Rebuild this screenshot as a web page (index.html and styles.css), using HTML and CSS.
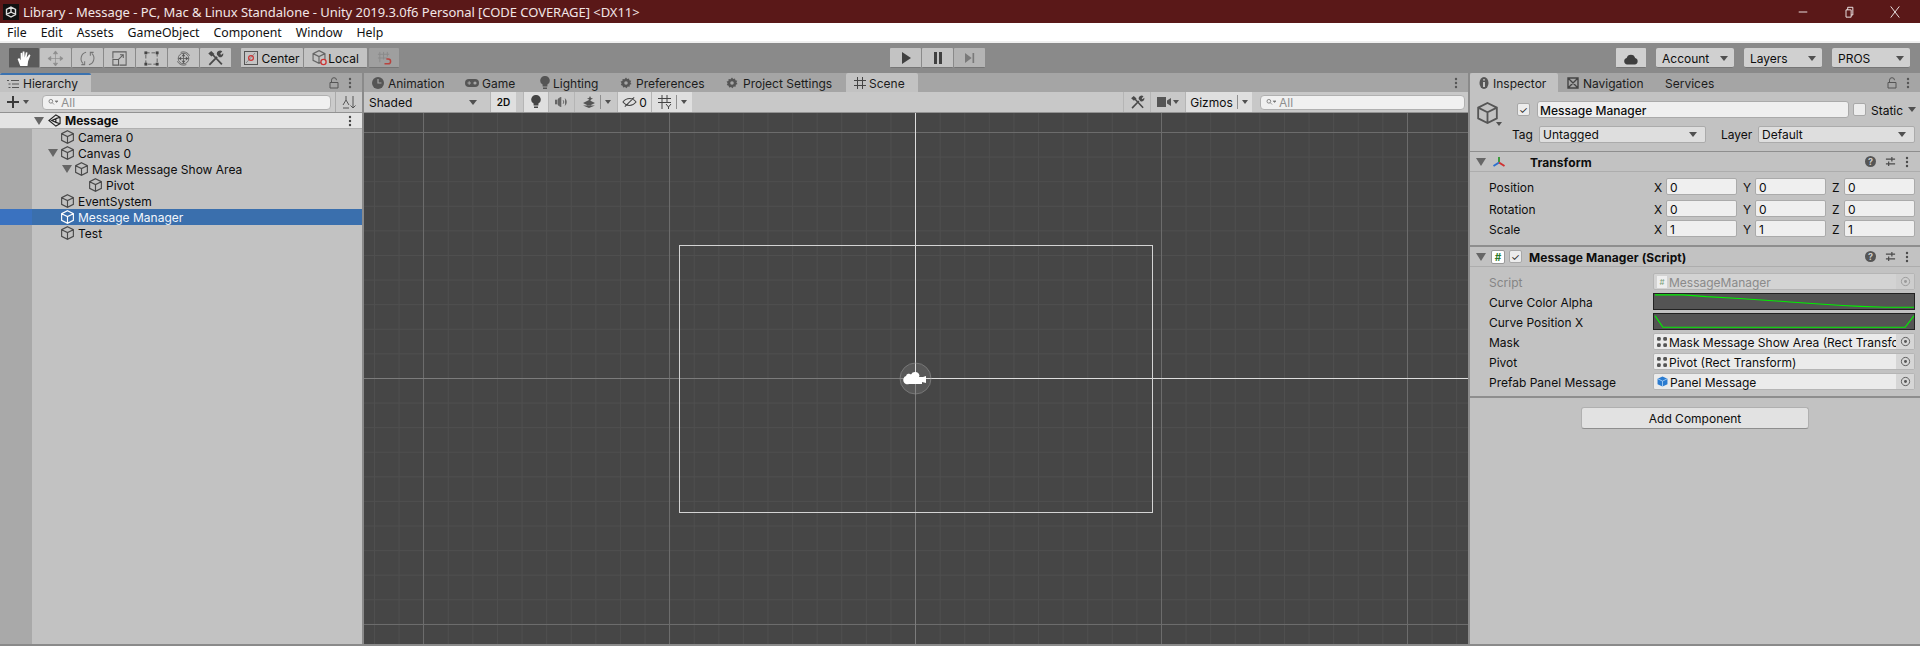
FILE: index.html
```html
<!doctype html>
<html lang="en">
<head>
    <meta charset="UTF-8">
    <title>Library - Message - Unity</title>
    <link rel="stylesheet" href="styles.css">
</head>
<body>
    <svg class="defs" width="0" height="0">
        <symbol id="cube" viewBox="0.8 0.4 12.4 13.2"><path d="M7 1 L12.6 3.8 V10.2 L7 13 L1.4 10.2 V3.8 Z M1.4 3.8 L7 6.6 L12.6 3.8 M7 6.6 V13" fill="none" stroke="currentColor" stroke-width="1.1"/></symbol>
        <symbol id="gear" viewBox="0 0 12 12"><path d="M6 0.5 L7.2 2 L9 1.4 L9.4 3.2 L11.2 3.8 L10.4 5.5 L11.5 7 L9.8 7.8 L9.6 9.7 L7.7 9.6 L6.5 11.3 L5 10 L3.1 10.6 L2.6 8.7 L0.8 8 L1.6 6.2 L0.6 4.6 L2.4 3.9 L2.6 2 L4.5 2.2 Z" fill="currentColor"/><circle cx="6" cy="6" r="1.8" fill="#a5a5a5"/></symbol>
        <symbol id="lock" viewBox="0 0 10 12"><path d="M2.5 5 V3.2 a2.5 2.5 0 0 1 5 0 M1 5.5 H9 V11 H1 Z" fill="none" stroke="currentColor" stroke-width="1"/></symbol>
        <symbol id="dots" viewBox="0 0 4 12"><circle cx="2" cy="2" r="1.2" fill="currentColor"/><circle cx="2" cy="6" r="1.2" fill="currentColor"/><circle cx="2" cy="10" r="1.2" fill="currentColor"/></symbol>
        <symbol id="target" viewBox="0 0 12 12"><circle cx="6" cy="6" r="4.5" fill="none" stroke="currentColor"/><circle cx="6" cy="6" r="1.6" fill="currentColor"/></symbol>
        <symbol id="lens" viewBox="0 0 14 10"><circle cx="4" cy="4" r="2.6" fill="none" stroke="currentColor" stroke-width="1.2"/><path d="M6 6 L8.5 8.5 M10 3.5 H14 L12 5.6 Z" stroke="currentColor" fill="currentColor"/></symbol>
        <symbol id="rect-handles" viewBox="0 0 8 8"><g fill="currentColor"><rect x="0" y="0" width="3" height="3" rx="1"/><rect x="5" y="0" width="3" height="3" rx="1"/><rect x="0" y="5" width="3" height="3" rx="1"/><rect x="5" y="5" width="3" height="3" rx="1"/></g></symbol>
        <symbol id="sliders" viewBox="0 0 12 12"><path d="M1 3.5 H11 M1 8.5 H11 M7.5 1 V6 M4 6 V11" stroke="currentColor" stroke-width="1.3" fill="none"/></symbol>
        <symbol id="wrench" viewBox="0 0 16 16"><path d="M2.2 14 L9.5 6.4 M5 4 L14 13.6" stroke="#4a4a4a" stroke-width="1.7" fill="none"/><path d="M1.2 3.4 L4 1 L7 3.8 L4.2 6.2 Z M9.4 4.5 a3 3 0 0 1 5 -3 L12.5 3.4 L13.2 4.6 L15.2 3 a3 3 0 0 1 -4 3.6 Z" fill="#4a4a4a"/></symbol>
    </svg>

    <div class="titlebar">
        <svg class="app-icon" viewBox="0 0 16 16"><rect width="16" height="16" fill="#111"/><path d="M8 3 L12.5 5.5 V10.5 L8 13 L3.5 10.5 V5.5 Z M8 3 V8 L3.5 10.5 M8 8 L12.5 10.5" fill="none" stroke="#ddd" stroke-width="1.4"/></svg>
        <span class="title-text">Library - Message - PC, Mac &amp; Linux Standalone - Unity 2019.3.0f6 Personal [CODE COVERAGE] &lt;DX11&gt;</span>
        <div class="win-buttons">
            <svg viewBox="0 0 14 14"><path d="M2 7 H12" stroke="#fff" stroke-width="1"/></svg>
            <svg viewBox="0 0 14 14"><path d="M3.5 4.5 H9.5 V13 H3.5 Z M5.5 4.5 V1.5 H11.5 V10.5 H9.5" fill="none" stroke="#fff"/></svg>
            <svg viewBox="0 0 14 14"><path d="M2 0.5 L12 13.5 M12 0.5 L2 13.5" stroke="#fff" stroke-width="1"/></svg>
        </div>
    </div>

    <div class="menubar">
        <span>File</span><span>Edit</span><span>Assets</span><span>GameObject</span><span>Component</span><span>Window</span><span>Help</span>
    </div>

    <div class="toolbar">
        <div class="btn-group tools">
            <div class="tool active hand"><svg viewBox="0 0 16 16"><path d="M4 15 L1.5 8.5 L3 7.6 L4.4 9.6 V2.8 L5.9 2.6 L6.3 7 V1.4 L7.9 1.4 L8.2 7 L9.3 2 L10.8 2.4 L10 7.4 L12.4 4 L13.6 5 L11.4 10.5 L10.8 15 Z" fill="#fff"/></svg></div>
            <div class="tool"><svg viewBox="0 0 18 18"><path d="M9 1 L11.2 4 H6.8 Z M9 17 L11.2 14 H6.8 Z M1 9 L4 6.8 V11.2 Z M17 9 L14 6.8 V11.2 Z M4 9 H14 M9 4 V14" fill="#8c8c8c" stroke="#8c8c8c" stroke-width="0.7"/></svg></div>
            <div class="tool"><svg viewBox="0 0 18 18"><path d="M7.5 2.5 A7 7 0 0 0 4.5 14.5 M10.5 15.5 A7 7 0 0 0 13.5 3.5 M2.5 15.5 H6 V12 M15.5 2.5 H12 V6" fill="none" stroke="#757575" stroke-width="1.1"/></svg></div>
            <div class="tool"><svg viewBox="0 0 18 18"><path d="M2 9 V2 H16 V16 H9 M2 10 H8 V16 H2 Z M8 10 L13 5 M9.5 5 H13 V8.5" fill="none" stroke="#5f5f5f" stroke-width="1.1"/></svg></div>
            <div class="tool"><svg viewBox="0 0 18 18"><path d="M3 3 H15 V15 H3 Z" fill="none" stroke="#5f5f5f" stroke-dasharray="4 2"/><g fill="#444"><rect x="1.5" y="1.5" width="3" height="3"/><rect x="13.5" y="1.5" width="3" height="3"/><rect x="1.5" y="13.5" width="3" height="3"/><rect x="13.5" y="13.5" width="3" height="3"/></g></svg></div>
            <div class="tool"><svg viewBox="0 0 18 18"><circle cx="9" cy="9" r="5.6" fill="none" stroke="#666"/><path d="M9 3.4 V14.6 M3.4 9 H14.6 M6 2.5 A7.5 7.5 0 0 1 15.5 6 M12 15.5 A7.5 7.5 0 0 1 2.5 12" fill="none" stroke="#666"/><path d="M9 4 L11 6.5 H7 Z M9 14 L11 11.5 H7 Z M4 9 L6.5 7 V11 Z M14 9 L11.5 7 V11 Z" fill="#555"/></svg></div>
            <div class="tool"><svg viewBox="0 0 16 16"><use href="#wrench"/></svg></div>
        </div>
        <div class="btn-group pivots">
            <div class="tool pivot-center"><svg viewBox="0 0 14 14"><rect x="0.5" y="0.5" width="13" height="13" fill="none" stroke="#555"/><path d="M2 12 L11 2" stroke="#888"/><circle cx="7" cy="7" r="2.4" fill="none" stroke="#c33" stroke-width="1.2"/></svg>Center</div>
            <div class="tool pivot-local"><svg viewBox="0 0 16 16"><use href="#cube" width="14" height="14"/><circle cx="11.5" cy="12" r="2.6" fill="#ccc" stroke="#c33" stroke-width="1.3"/></svg>Local</div>
        </div>
        <div class="tool snap"><svg viewBox="0 0 16 16"><path d="M3 1 V12 M7 1 V9 M11 1 V6 M1 3.5 H13 M1 7.5 H11" stroke="#8a8a8a" fill="none"/><path d="M8 13.6 H12 a2.2 2.2 0 0 0 0 -5 H10" fill="none" stroke="#b8433e" stroke-width="1.6"/></svg></div>

        <div class="btn-group play">
            <div class="tool"><svg viewBox="0 0 10 12"><path d="M1 0 L10 6 L1 12 Z" fill="#404040"/></svg></div>
            <div class="tool"><svg viewBox="0 0 10 12"><path d="M1 0 H4 V12 H1 Z M6 0 H9 V12 H6 Z" fill="#404040"/></svg></div>
            <div class="tool step"><svg viewBox="0 0 12 12"><path d="M0 0 L8 6 L0 12 Z M9 0 H11 V12 H9 Z" fill="#7a7a7a"/></svg></div>
        </div>

        <div class="tool cloud"><svg viewBox="0 0 14 12"><path d="M3.5 11.5 a3 3 0 0 1 -0.5 -5.9 a4 4 0 0 1 7.8 0 a3 3 0 0 1 -0.3 5.9 Z" fill="#3e3e3e"/></svg></div>
        <div class="drop">Account<i class="arrow"></i></div>
        <div class="drop">Layers<i class="arrow"></i></div>
        <div class="drop">PROS<i class="arrow"></i></div>
    </div>

    <div class="workspace">
        <section class="panel hierarchy">
            <div class="tabs">
                <div class="tab active blue">
                    <svg class="tab-icon" viewBox="0 0 12 10"><path d="M0 1.5 H2 M4 1.5 H12 M1.5 5 H3.5 M5 5 H12 M1.5 8.5 H3.5 M5 8.5 H12" stroke="#555"/></svg>Hierarchy
                </div>
                <div class="tab-actions"><svg class="lock"><use href="#lock"/></svg><svg class="dots"><use href="#dots"/></svg></div>
            </div>
            <div class="subbar hier-bar">
                <svg class="plus" viewBox="0 0 12 12"><path d="M6 0 V12 M0 6 H12" stroke="#3a3a3a" stroke-width="2"/></svg>
                <i class="arrow plus-arrow"></i>
                <div class="search"><svg class="lens"><use href="#lens"/></svg>All</div>
                <div class="sort"><svg viewBox="0 0 14 14"><path d="M4 1 V5 M1 10 L4 5 L7 10 M1 13 H7" stroke="#555" fill="none"/><path d="M11 1 V13 M8.5 10.5 L11 13 L13.5 10.5" stroke="#555" fill="none"/></svg></div>
            </div>
            <div class="tree">
                <div class="scene-row"><i class="fold"></i><svg class="unity-mark" viewBox="0 0 14 14"><path d="M8.5 1 L13 3.6 V10.4 L8.5 13 L1 7 Z M8.5 5 L13 3.6 M8.5 9 L13 10.4 M8.5 5 V9 L4 7 Z" fill="none" stroke="#222" stroke-width="1.2"/></svg><b>Message</b><svg class="dots row-dots"><use href="#dots"/></svg></div>
                <div class="row d1"><svg class="cube"><use href="#cube"/></svg>Camera 0</div>
                <div class="row d1 open"><i class="fold"></i><svg class="cube"><use href="#cube"/></svg>Canvas 0</div>
                <div class="row d2 open"><i class="fold"></i><svg class="cube"><use href="#cube"/></svg>Mask Message Show Area</div>
                <div class="row d3"><svg class="cube"><use href="#cube"/></svg>Pivot</div>
                <div class="row d1"><svg class="cube"><use href="#cube"/></svg>EventSystem</div>
                <div class="row d1 selected"><svg class="cube"><use href="#cube"/></svg>Message Manager</div>
                <div class="row d1"><svg class="cube"><use href="#cube"/></svg>Test</div>
            </div>
        </section>

        <section class="panel center">
            <div class="tabs">
                <div class="tab t-anim"><svg class="tab-icon" viewBox="0 0 12 12"><circle cx="6" cy="6" r="6" fill="#555"/><path d="M6 2 V6 H9.5" stroke="#a5a5a5" stroke-width="1.2" fill="none"/></svg>Animation</div>
                <div class="tab t-game"><svg class="tab-icon wide" viewBox="0 0 14 8"><rect width="14" height="8" rx="4" fill="#555"/><circle cx="10" cy="4" r="1.6" fill="#a5a5a5"/><path d="M2.5 4 H6 M4.2 2.2 V5.8" stroke="#a5a5a5"/></svg>Game</div>
                <div class="tab t-light"><svg class="tab-icon bulb" viewBox="0 0 10 14"><path d="M5 0 a4.6 4.6 0 0 1 2.4 8.6 V10.4 H2.6 V8.6 A4.6 4.6 0 0 1 5 0 Z M3 11.6 H7 V13 H3 Z" fill="#555"/></svg>Lighting</div>
                <div class="tab t-pref"><svg class="tab-icon"><use href="#gear"/></svg>Preferences</div>
                <div class="tab t-proj"><svg class="tab-icon"><use href="#gear"/></svg>Project Settings</div>
                <div class="tab active t-scene"><svg class="tab-icon" viewBox="0 0 12 12"><path d="M3.5 0 V12 M8.5 0 V12 M0 3.5 H12 M0 8.5 H12" stroke="#444"/></svg>Scene</div>
                <div class="tab-actions"><svg class="dots"><use href="#dots"/></svg></div>
            </div>
            <div class="subbar scene-bar">
                <div class="shaded">Shaded<i class="arrow"></i></div>
                <div class="scene-btn two-d">2D</div>
                <div class="scene-btn on w25"><svg class="bulb-sm" viewBox="0 0 10 14"><path d="M5 0 a4.6 4.6 0 0 1 2.4 8.6 V10.4 H2.6 V8.6 A4.6 4.6 0 0 1 5 0 Z M3 11.6 H7 V13 H3 Z" fill="#444"/></svg></div>
                <div class="scene-btn w26"><svg class="audio" viewBox="0 0 14 10"><path d="M0 3 H2 V7 H0 Z M3 2 L6 0 V10 L3 8 Z M8 3 a3 3 0 0 1 0 4 M10 1.5 a5 5 0 0 1 0 7" fill="#666" stroke="#666" stroke-width="0.6"/></svg></div>
                <div class="scene-btn w43"><svg class="fx" viewBox="0 0 14 12"><path d="M1 7 L7 4 L13 7 L7 10 Z M1 9.5 L7 12 L13 9.5 M8 0 L9 2 L11 2.5 L9 3.5 L8 5.5 L7 3.5 L5 2.5 L7 2 Z" fill="#555"/></svg><span class="sep"></span><i class="arrow"></i></div>
                <div class="scene-btn on w34"><svg class="eye" viewBox="0 0 16 12"><path d="M1 6 C5 1 11 1 15 6 C11 11 5 11 1 6 Z M3 11 L13 1" fill="none" stroke="#444" stroke-width="1.1"/></svg>0</div>
                <div class="scene-btn on w41"><svg class="gridv" viewBox="0 0 14 14"><path d="M4 0 V14 M9 0 V7 M0 3.5 H13 M0 7.5 H13 M8 9 L10.5 12 L13 9 M10.5 12 V14" fill="none" stroke="#444"/></svg><span class="sep"></span><i class="arrow"></i></div>
                <div class="spacer"></div>
                <div class="scene-btn w27"><svg class="tools-sm" viewBox="0 0 16 16"><use href="#wrench"/></svg></div>
                <div class="scene-btn w35"><svg class="cam" viewBox="0 0 14 10"><path d="M0 0 H9 V10 H0 Z M10 3.5 L14 1 V9 L10 6.5 Z" fill="#555"/></svg><i class="arrow"></i></div>
                <div class="scene-btn on gizmos">Gizmos<span class="sep"></span><i class="arrow"></i></div>
                <div class="search scene-search"><svg class="lens"><use href="#lens"/></svg>All</div>
            </div>
            <div class="viewport">
                <svg class="gizmo-layer" width="1104" height="531" viewBox="364 113 1104 531">
                    <path d="M364 378.5 H915" stroke="#7c7c7c"/>
                    <path d="M915.5 378 V644" stroke="#7c7c7c"/>
                    <path d="M915 378.5 H1468" stroke="#dedede"/>
                    <path d="M915.5 113 V378" stroke="#dedede"/>
                    <rect x="679.5" y="245.5" width="473" height="267" fill="none" stroke="#d4d4d4"/>
                    <circle cx="915.5" cy="378.5" r="15.5" fill="#ffffff" fill-opacity="0.1" stroke="#8d8d8d" stroke-opacity="0.6"/>
                    <path d="M906 376 a3 3 0 0 1 5 -1.5 a4.6 4.6 0 0 1 8.5 1 L919 377 H923 L926 376 V383 L922 382 V384 H909 a4 4 0 0 1 -3 -8 Z" fill="#fff"/>
                </svg>
            </div>
        </section>

        <section class="panel inspector">
            <div class="tabs">
                <div class="tab active insp-tab"><svg class="tab-icon info" viewBox="0 0 10 12"><ellipse cx="5" cy="6" rx="4.5" ry="6" fill="#555"/><path d="M5 2.2 V3.6 M5 5 V10" stroke="#ddd" stroke-width="1.6"/></svg>Inspector</div>
                <div class="tab nav-tab"><svg class="tab-icon" viewBox="0 0 12 12"><path d="M1 1 H11 V11 H1 Z M1 1 L11 11 M11 1 L1 11" fill="none" stroke="#444" stroke-width="1.4"/></svg>Navigation</div>
                <div class="tab">Services</div>
                <div class="tab-actions"><svg class="lock"><use href="#lock"/></svg><svg class="dots"><use href="#dots"/></svg></div>
            </div>
            <div class="object-head">
                <div class="obj-icon"><svg class="cube-lg"><use href="#cube"/></svg><i class="arrow"></i></div>
                <div class="obj-fields">
                    <div class="obj-line">
                        <span class="check on">&#10003;</span>
                        <div class="name-field">Message Manager</div>
                        <span class="check"></span>
                        <span class="static">Static</span><i class="arrow"></i>
                    </div>
                    <div class="obj-line tag-line">
                        <span class="tag-label">Tag</span>
                        <div class="combo tag">Untagged<i class="arrow"></i></div>
                        <span class="layer-label">Layer</span>
                        <div class="combo layer">Default<i class="arrow"></i></div>
                    </div>
                </div>
            </div>
            <div class="comp-head">
                <i class="fold"></i>
                <svg class="axis" viewBox="0 0 14 12"><path d="M7 1 V6" stroke="#3c9a3c" stroke-width="2"/><path d="M7 6.5 L1.5 10" stroke="#2a6fd0" stroke-width="2"/><path d="M7 6.5 L12.5 10" stroke="#d03030" stroke-width="2"/></svg>
                <b class="transform-title">Transform</b>
                <div class="comp-actions">
                    <span class="help">?</span><svg class="sliders"><use href="#sliders"/></svg><svg class="dots"><use href="#dots"/></svg>
                </div>
            </div>
            <div class="transform">
                <div class="vec-row"><label>Position</label><div class="vec"><span>X</span><em>0</em><span>Y</span><em>0</em><span>Z</span><em>0</em></div></div>
                <div class="vec-row gap6"><label>Rotation</label><div class="vec"><span>X</span><em>0</em><span>Y</span><em>0</em><span>Z</span><em>0</em></div></div>
                <div class="vec-row gap4"><label>Scale</label><div class="vec"><span>X</span><em>1</em><span>Y</span><em>1</em><span>Z</span><em>1</em></div></div>
            </div>
            <div class="comp-head script-head">
                <i class="fold"></i>
                <span class="script-icon">#</span>
                <span class="check on">&#10003;</span>
                <b>Message Manager (Script)</b>
                <div class="comp-actions">
                    <span class="help">?</span><svg class="sliders"><use href="#sliders"/></svg><svg class="dots"><use href="#dots"/></svg>
                </div>
            </div>
            <div class="props">
                <div class="prop disabled"><label>Script</label><div class="ref"><span class="script-mini">#</span><span class="ref-text">MessageManager</span><span class="pick"><svg><use href="#target"/></svg></span></div></div>
                <div class="prop"><label>Curve Color Alpha</label><svg class="curve" viewBox="0 0 262 17" preserveAspectRatio="none"><path d="M1 1 H29 L53 3 L86 5 L112 7 L137 9 L163 11 L190 13 L208 14 L233 15 H262" fill="none" stroke="#00f000" stroke-width="1.2"/></svg></div>
                <div class="prop"><label>Curve Position X</label><svg class="curve" viewBox="0 0 262 17" preserveAspectRatio="none"><path d="M1 2 L9 15 H253 L262 2" fill="none" stroke="#00f000" stroke-width="1.2"/></svg></div>
                <div class="prop"><label>Mask</label><div class="ref"><svg class="handles"><use href="#rect-handles"/></svg><span class="ref-text">Mask Message Show Area (Rect Transfo</span><span class="pick"><svg><use href="#target"/></svg></span></div></div>
                <div class="prop"><label>Pivot</label><div class="ref"><svg class="handles"><use href="#rect-handles"/></svg><span class="ref-text">Pivot (Rect Transform)</span><span class="pick"><svg><use href="#target"/></svg></span></div></div>
                <div class="prop"><label>Prefab Panel Message</label><div class="ref"><svg class="prefab" viewBox="0 0 12 12"><path d="M6 0.5 L11.4 3 V9 L6 11.5 L0.6 9 V3 Z" fill="#2a7bd0"/><path d="M0.8 3 L6 5.6 L11.2 3 M6 5.6 V11.5" stroke="#bfe0ff" stroke-width="0.8" fill="none"/></svg><span class="ref-text">Panel Message</span><span class="pick"><svg><use href="#target"/></svg></span></div></div>
            </div>
            <div class="add-wrap"><div class="add-btn">Add Component</div></div>
        </section>
    </div>
</body>
</html>
```

FILE: styles.css
```css
* {
    box-sizing: border-box;
}
html, body {
    margin: 0;
    height: 100%;
}
body {
    width: 1920px;
    height: 646px;
    overflow: hidden;
    display: flex;
    flex-direction: column;
    font-family: Inter, "Liberation Sans", sans-serif;
    font-size: 12px;
    color: #0d0d0d;
    background: #8a8a8a;
}
svg {
    display: block;
    flex: none;
}
.defs {
    position: absolute;
}
.arrow {
    display: block;
    flex: none;
    width: 0;
    height: 0;
    border-left: 4px solid transparent;
    border-right: 4px solid transparent;
    border-top: 5px solid #505050;
}

/* window chrome */
.titlebar {
    height: 23px;
    display: flex;
    align-items: center;
    padding-left: 3px;
    background: #5a1818;
    color: #f2e6e6;
    font-family: "Noto Sans", sans-serif;
    font-size: 13px;
}
.app-icon {
    width: 16px;
    height: 16px;
    margin-right: 4px;
}
.title-text {
    flex: 1;
    letter-spacing: -0.05px;
}
.win-buttons {
    display: flex;
    gap: 34px;
    margin-right: 19px;
}
.win-buttons svg {
    width: 12px;
    height: 14px;
}
.menubar {
    height: 20px;
    display: flex;
    align-items: center;
    gap: 14px;
    padding: 0 0 2px 7px;
    background: #fff;
    color: #111;
    font-family: "Noto Sans", sans-serif;
    font-size: 12.3px;
    box-shadow: inset 0 -2px 0 #f0f0f0;
}

/* main toolbar */
.toolbar {
    height: 30px;
    display: flex;
    align-items: center;
    padding: 0 9px;
    background: #8a8a8a;
}
.btn-group {
    display: flex;
    gap: 1px;
}
.tool {
    height: 20px;
    width: 31px;
    padding-top: 1px;
    display: flex;
    align-items: center;
    justify-content: center;
    background: #c3c3c3;
    border-bottom: 1px solid #767676;
    border-radius: 1px;
}
.tools svg {
    width: 17px;
    height: 17px;
}
.tool.hand {
    width: 30px;
}
.tool.active {
    background: #5a5a5a;
}
.pivots {
    margin-left: 10px;
}
.pivot-center {
    width: 62px;
    gap: 3px;
}
.pivot-center svg {
    width: 14px;
    height: 14px;
}
.pivot-local {
    width: 63px;
    gap: 0;
}
.pivot-local svg {
    width: 16px;
    height: 16px;
    color: #666;
}
.snap {
    width: 30px;
    margin-left: 2px;
    background: #9f9f9f;
}
.snap svg {
    width: 15px;
    height: 15px;
}
.play {
    margin-left: 491px;
}
.play .tool {
    width: 31px;
}
.play svg {
    width: 10px;
    height: 12px;
}
.play .step {
    background: #b4b4b4;
}
.cloud {
    margin-left: 631px;
    width: 30px;
    background: #d0d0d0;
}
.cloud svg {
    width: 16px;
    height: 13px;
}
.drop {
    width: 78px;
    height: 20px;
    margin-left: 10px;
    padding: 1px 6px 0;
    display: flex;
    align-items: center;
    justify-content: space-between;
    background: #d0d0d0;
    border-bottom: 1px solid #767676;
    border-radius: 2px;
}

/* panels */
.workspace {
    height: 573px;
    display: flex;
    padding-bottom: 2px;
    gap: 2px;
}
.panel {
    display: flex;
    flex-direction: column;
    background: #c2c2c2;
}
.hierarchy {
    width: 362px;
}
.center {
    width: 1104px;
    background: #464646;
}
.inspector {
    width: 450px;
}
.tabs {
    height: 19px;
    flex: none;
    display: flex;
    background: #a5a5a5;
}
.tab {
    height: 19px;
    flex: none;
    display: flex;
    align-items: center;
    gap: 4px;
    padding: 1px 0 0 8px;
    color: #1c1c1c;
}
.tab.active {
    background: #c2c2c2;
    border-radius: 2px 2px 0 0;
}
.tab.blue {
    width: 91px;
    border-top: 2px solid #3a72b0;
    padding: 0 7px;
}
.t-anim {
    width: 93px;
}
.t-game {
    width: 73px;
    gap: 3px;
}
.t-light {
    width: 82px;
    padding-left: 10px;
    gap: 3px;
}
.t-pref {
    width: 106px;
}
.t-proj {
    width: 128px;
    gap: 5px;
}
.t-scene {
    width: 72px;
    gap: 3px;
}
.tab-icon {
    width: 12px;
    height: 12px;
    color: #555;
}
.tab-icon.wide {
    width: 14px;
    height: 8px;
}
.tab-icon.bulb {
    width: 10px;
    height: 14px;
}
.tab-icon.info {
    width: 10px;
    height: 12px;
}
.tab-actions {
    margin-left: auto;
    display: flex;
    align-items: center;
    gap: 9px;
    padding-right: 10px;
    color: #555;
}
.lock {
    width: 10px;
    height: 12px;
}
.dots {
    width: 4px;
    height: 12px;
}
.subbar {
    height: 21px;
    flex: none;
    display: flex;
    align-items: center;
    background: #cbcbcb;
    border-bottom: 1px solid #929292;
}

/* hierarchy */
.plus {
    width: 12px;
    height: 12px;
    margin-left: 7px;
}
.plus-arrow {
    margin-left: 4px;
    border-left-width: 3px;
    border-right-width: 3px;
    border-top-width: 4px;
}
.search {
    height: 15px;
    display: flex;
    align-items: center;
    gap: 3px;
    padding-left: 5px;
    background: #f0f0f0;
    border: 1px solid #b0b0b0;
    border-radius: 4px;
    color: #8f8f8f;
}
.hier-bar .search {
    width: 289px;
    margin-left: 13px;
}
.lens {
    width: 10px;
    height: 8px;
    color: #777;
}
.sort {
    margin-left: 4px;
    padding-left: 6px;
    height: 20px;
    display: flex;
    align-items: center;
    border-left: 1px solid #aaa;
}
.sort svg {
    width: 14px;
    height: 14px;
}
.tree {
    flex: 1;
    background: linear-gradient(to right, #a9a9a9 32px, #c2c2c2 32px);
}
.scene-row {
    height: 16px;
    display: flex;
    align-items: center;
    padding-left: 34px;
    background: #e4e4e4;
    border-bottom: 1px solid #b0b0b0;
}
.fold {
    display: block;
    flex: none;
    width: 0;
    height: 0;
    border-left: 5px solid transparent;
    border-right: 5px solid transparent;
    border-top: 8px solid #666;
}
.unity-mark {
    width: 13px;
    height: 13px;
    margin-left: 4px;
    margin-right: 4px;
}
.row-dots {
    margin-left: auto;
    margin-right: 10px;
    color: #444;
}
.row {
    height: 16px;
    display: flex;
    align-items: center;
}
.cube {
    width: 13px;
    height: 14px;
    margin-right: 4px;
    color: #4a4a4a;
}
.row.d1 {
    padding-left: 61px;
}
.row.d2 {
    padding-left: 75px;
}
.row.d3 {
    padding-left: 89px;
}
.row.d1.open {
    padding-left: 48px;
}
.row.d2.open {
    padding-left: 62px;
}
.row .fold {
    margin-right: 3px;
}
.row.selected {
    background: linear-gradient(to right, #3a72c0 32px, #3a6fad 32px);
    color: #f2f6fb;
}
.row.selected .cube {
    color: #fff;
}

/* scene view */
.scene-bar {
    background: #c8c8c8;
}
.shaded {
    width: 120px;
    height: 20px;
    padding: 0 7px 0 5px;
    display: flex;
    align-items: center;
    justify-content: space-between;
}
.scene-btn {
    height: 20px;
    display: flex;
    align-items: center;
    justify-content: center;
    gap: 2px;
    border-left: 1px solid #b5b5b5;
}
.scene-btn.on {
    background: #dfdfdf;
}
.two-d {
    width: 26px;
    margin-left: 6px;
    margin-right: 7px;
    background: #dfdfdf;
    font-size: 10px;
    font-weight: 600;
}
.w25 {
    width: 25px;
}
.w26 {
    width: 26px;
}
.w27 {
    width: 27px;
}
.w34 {
    width: 34px;
}
.w35 {
    width: 35px;
}
.w41 {
    width: 41px;
}
.w43 {
    width: 43px;
}
.scene-btn .arrow {
    border-left-width: 3px;
    border-right-width: 3px;
    border-top-width: 4px;
}
.sep {
    width: 1px;
    height: 14px;
    margin: 0 2px;
    background: #8f8f8f;
}
.bulb-sm {
    width: 10px;
    height: 14px;
}
.audio {
    width: 14px;
    height: 10px;
}
.fx {
    width: 14px;
    height: 12px;
}
.eye {
    width: 15px;
    height: 12px;
}
.gridv {
    width: 14px;
    height: 14px;
}
.tools-sm {
    width: 15px;
    height: 15px;
}
.cam {
    width: 14px;
    height: 10px;
}
.gizmos {
    width: 67px;
}
.spacer {
    flex: 1;
}
.scene-search {
    width: 205px;
    margin-left: 8px;
    margin-right: 3px;
}
.viewport {
    flex: 1;
    position: relative;
    overflow: hidden;
    background-color: #464646;
    background-image:
        linear-gradient(to right, #6c6c6c 1px, transparent 1px),
        linear-gradient(to bottom, #6c6c6c 1px, transparent 1px),
        linear-gradient(to right, #4f4f4f 1px, transparent 1px),
        linear-gradient(to bottom, #4f4f4f 1px, transparent 1px);
    background-size: 246px 246px, 246px 246px, 24.6px 24.6px, 24.6px 24.6px;
    background-position: 59px 0, 0 19px, 10px 0, 0 19px;
}
.gizmo-layer {
    position: absolute;
    left: 0;
    top: 0;
}

/* inspector */
.insp-tab {
    width: 88px;
    padding-left: 9px;
}
.nav-tab {
    width: 99px;
    padding-left: 9px;
}
.object-head {
    height: 60px;
    flex: none;
    display: flex;
    border-bottom: 1px solid #8e8e8e;
}
.obj-icon {
    width: 39px;
    position: relative;
    padding: 10px 0 0 7px;
}
.cube-lg {
    width: 21px;
    height: 22px;
    color: #555;
}
.obj-icon .arrow {
    position: absolute;
    left: 26px;
    top: 30px;
    border-left-width: 3px;
    border-right-width: 3px;
    border-top-width: 4px;
}
.obj-fields {
    flex: 1;
    display: flex;
    flex-direction: column;
    padding-top: 9px;
}
.obj-line {
    display: flex;
    align-items: center;
    padding-left: 8px;
    height: 17px;
}
.check {
    width: 13px;
    height: 13px;
    flex: none;
    display: flex;
    align-items: center;
    justify-content: center;
    background: #ececec;
    border: 1px solid #a8a8a8;
    border-radius: 2px;
    font-size: 10px;
    line-height: 1;
    color: #222;
}
.name-field {
    width: 312px;
    height: 17px;
    margin: 0 4px 0 7px;
    padding: 1px 0 0 2px;
    display: flex;
    align-items: center;
    background: #efefef;
    border: 1px solid #aaa;
    border-radius: 3px;
    font-weight: 500;
}
.static {
    margin: 1px 5px 0 5px;
}
.tag-line {
    margin-top: 8px;
    padding-left: 3px;
    height: 16px;
}
.tag-label {
    width: 27px;
    padding-top: 1px;
}
.combo {
    height: 17px;
    padding: 0 8px 0 3px;
    display: flex;
    align-items: center;
    justify-content: space-between;
    background: #dedede;
    border: 1px solid #ababab;
    border-radius: 2px;
}
.combo.tag {
    width: 167px;
}
.combo.layer {
    width: 157px;
}
.layer-label {
    width: 37px;
    margin-left: 15px;
    padding-top: 1px;
}
.comp-head {
    height: 20px;
    flex: none;
    display: flex;
    align-items: center;
    padding-left: 6px;
    border-bottom: 1px solid #adadad;
}
.comp-head b {
    padding-top: 1px;
    letter-spacing: 0.08px;
}
.axis {
    width: 14px;
    height: 12px;
    margin-left: 6px;
}
.transform-title {
    margin-left: 24px;
}
.comp-actions {
    margin-left: auto;
    display: flex;
    align-items: center;
    gap: 9px;
    padding-right: 11px;
    color: #4a4a4a;
}
.help {
    width: 11px;
    height: 11px;
    border-radius: 50%;
    background: #555;
    color: #ccc;
    font-size: 9px;
    font-weight: 700;
    line-height: 11px;
    text-align: center;
}
.sliders {
    width: 11px;
    height: 11px;
}
.transform {
    height: 75px;
    flex: none;
    padding-top: 6px;
    border-bottom: 2px solid #8e8e8e;
}
.vec-row {
    display: flex;
    align-items: center;
    height: 17px;
    padding-left: 19px;
}
.vec-row.gap6 {
    margin-top: 5px;
}
.vec-row.gap4 {
    margin-top: 3px;
}
.vec-row label {
    width: 165px;
    flex: none;
    padding-top: 1px;
}
.vec {
    display: flex;
    align-items: center;
    flex: none;
}
.vec span {
    width: 12px;
    flex: none;
    padding-top: 1px;
}
.vec em {
    width: 71px;
    height: 17px;
    flex: none;
    margin-right: 6px;
    padding: 1px 0 0 3px;
    display: flex;
    align-items: center;
    background: #efefef;
    border: 1px solid #aaa;
    border-radius: 2px;
    font-style: normal;
}
.vec em:last-child {
    margin-right: 0;
}
.script-head .check {
    margin-left: 4px;
}
.script-head b {
    margin-left: 7px;
}
.script-icon {
    width: 14px;
    height: 14px;
    margin-left: 5px;
    background: #fff;
    border: 1px solid #999;
    border-radius: 2px;
    color: #2b7a2b;
    font-size: 10px;
    font-weight: 700;
    text-align: center;
    line-height: 12px;
}
.props {
    padding-top: 6px;
    height: 131px;
    flex: none;
    border-bottom: 2px solid #8e8e8e;
}
.prop {
    height: 17px;
    margin-bottom: 3px;
    display: flex;
    align-items: center;
    padding-left: 19px;
}
.prop label {
    width: 164px;
    flex: none;
    padding-top: 1px;
}
.ref {
    width: 262px;
    height: 17px;
    display: flex;
    align-items: center;
    padding-left: 3px;
    background: #ebebeb;
    border: 1px solid #b5b5b5;
    border-radius: 2px;
}
.ref-text {
    flex: 1;
    min-width: 0;
    white-space: nowrap;
    margin-left: 2px;
    padding-top: 1px;
}
.pick {
    width: 18px;
    height: 15px;
    flex: none;
    display: flex;
    align-items: center;
    justify-content: center;
    background: #d6d6d6;
    color: #555;
}
.pick svg {
    width: 11px;
    height: 11px;
}
.handles {
    width: 10px;
    height: 10px;
    color: #555;
}
.prefab {
    width: 11px;
    height: 11px;
}
.disabled {
    color: #858585;
}
.disabled .ref {
    background: #d3d3d3;
    color: #8a8a8a;
}
.disabled .pick {
    color: #999;
    background: #cdcdcd;
}
.script-mini {
    width: 10px;
    height: 12px;
    background: #eee;
    font-size: 8px;
    color: #7aa07a;
    text-align: center;
    line-height: 12px;
}
.curve {
    width: 262px;
    height: 17px;
    background: #545454;
    border: 1px solid #222;
}
.add-wrap {
    display: flex;
    justify-content: center;
    padding-top: 9px;
}
.add-btn {
    width: 228px;
    height: 22px;
    padding-top: 1px;
    display: flex;
    align-items: center;
    justify-content: center;
    background: #e2e2e2;
    border: 1px solid #b0b0b0;
    border-bottom-color: #8e8e8e;
    border-radius: 3px;
}
```
